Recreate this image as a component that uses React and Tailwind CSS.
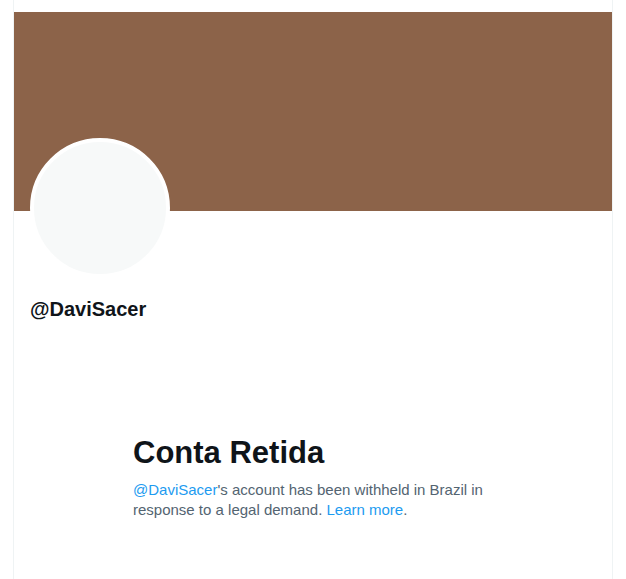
import React from 'react';

export default function App() {
  return (
    <div className="min-h-screen bg-white" style={{ fontFamily: '"Liberation Sans", Arial, sans-serif' }}>
      <div className="ml-[13px] w-[600px] min-h-[579px] border-x border-[#eff3f4] pt-3">
        {/* banner */}
        <div className="h-[199px] bg-[#8c6349]" />

        {/* avatar + handle */}
        <div className="px-4">
          <div className="-mt-[73px] w-[140px] h-[140px] rounded-full border-[4px] border-white bg-[#f7f9f9]" />
          <div className="mt-[19px] text-[20px] leading-6 font-bold text-[#0f1419]">@DaviSacer</div>
        </div>

        {/* withheld notice */}
        <div className="w-[360px] mx-auto mt-[114px]">
          <h2 className="text-[31px] leading-9 font-bold text-[#0f1419]">Conta Retida</h2>
          <p className="mt-[9px] text-[15px] leading-5 text-[#536471]">
            <span className="text-[#1d9bf0]">@DaviSacer</span>'s account has been withheld in Brazil in response to a legal demand.{' '}
            <span className="text-[#1d9bf0]">Learn more</span>.
          </p>
        </div>
      </div>
    </div>
  );
}
